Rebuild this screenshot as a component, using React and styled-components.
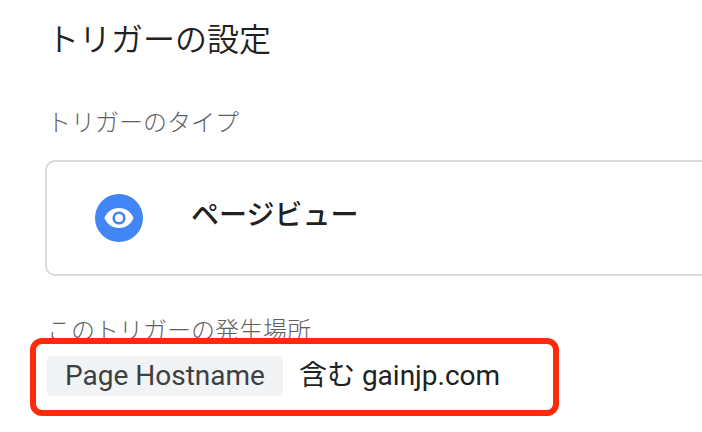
import styled, { createGlobalStyle } from 'styled-components';

const trigger = {
  type: 'ページビュー',
  variable: 'Page Hostname',
  operator: '含む',
  value: 'gainjp.com',
};

function App() {
  return (
    <>
      <GlobalStyle />
      <Panel>
        <Title>トリガーの設定</Title>
        <Section $gap={21}>
          <Label>トリガーのタイプ</Label>
          <TypeCard>
            <TypeIcon />
            <TypeName>{trigger.type}</TypeName>
          </TypeCard>
        </Section>
        <Section $gap={9}>
          <Label>このトリガーの発生場所</Label>
          <Condition>
            <Variable>{trigger.variable}</Variable>
            <span>
              {trigger.operator} {trigger.value}
            </span>
            <Highlight />
          </Condition>
        </Section>
      </Panel>
    </>
  );
}

function TypeIcon() {
  return (
    <Icon viewBox="0 0 48 48" aria-hidden="true">
      <circle cx="24" cy="24" r="24" fill="#4285f4" />
      <path
        fill="#fff"
        fillRule="evenodd"
        d="M24 14C17.4 14 11.7 18.1 9.4 24C11.7 29.9 17.4 34 24 34S36.3 29.9 38.6 24C36.3 18.1 30.6 14 24 14ZM24 30.6A6.6 6.6 0 1 1 24 17.4A6.6 6.6 0 0 1 24 30.6ZM24 28A4 4 0 1 0 24 20A4 4 0 0 0 24 28Z"
      />
    </Icon>
  );
}

export default App;

const GlobalStyle = createGlobalStyle`
  * {
    box-sizing: border-box;
  }

  body {
    margin: 0;
    background: #fff;
    color: #212121;
    font-family: Roboto, 'Noto Sans CJK JP', sans-serif;
    overflow-x: hidden;
  }
`;

const Panel = styled.main`
  display: flex;
  flex-direction: column;
  gap: 39px;
  padding: 12px 0 36px 45px;
`;

const Title = styled.h1`
  margin: 0 2px;
  font-size: 32px;
  font-weight: 350;
  line-height: 56px;
`;

const Section = styled.section`
  display: flex;
  flex-direction: column;
  gap: ${({ $gap }) => $gap}px;
`;

const Label = styled.h2`
  margin: 0 2px;
  color: #616161;
  font-size: 24px;
  font-weight: 300;
  line-height: 32px;
`;

const TypeCard = styled.div`
  display: flex;
  align-items: center;
  gap: 48px;
  height: 116px;
  padding: 0 48px;
  border: 2px solid #dadada;
  border-right: 0;
  border-radius: 10px 0 0 10px;
`;

const Icon = styled.svg`
  flex: none;
  width: 48px;
  height: 48px;
`;

const TypeName = styled.span`
  padding-bottom: 4px;
  font-size: 28px;
  font-weight: 500;
  line-height: 40px;
`;

const Condition = styled.div`
  position: relative;
  display: flex;
  align-items: center;
  align-self: flex-start;
  gap: 16px;
  margin: 0 2px;
  font-size: 28px;
  line-height: 40px;
`;

const Variable = styled.span`
  padding: 0 18px;
  border-radius: 4px;
  background: #f1f3f4;
  color: #3c4043;
`;

/* Marker frame drawn over the condition and the edge of its label */
const Highlight = styled.div`
  position: absolute;
  inset: -18px -59px -20px -17px;
  border: 6px solid #ff2a0a;
  border-radius: 12px;
`;
